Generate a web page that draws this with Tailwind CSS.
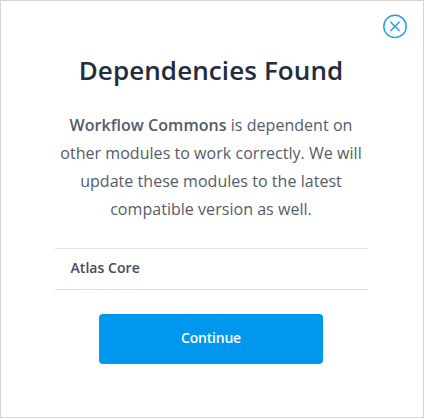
<!DOCTYPE html>
<html lang="en"><head><meta charset="utf-8"><title>Dependencies Found</title>
<script src="https://cdn.jsdelivr.net/npm/@tailwindcss/browser@4"></script></head>
<body class="bg-white font-['Open_Sans',sans-serif]">
<main class="relative flex h-[418px] w-[424px] flex-col items-center border border-[#d5d5d5] bg-white pr-[55px] pl-[53px] pt-[49px]">
<button aria-label="Close" class="absolute top-[12px] right-[15px] size-[26px]">
<svg viewBox="0 0 26 26" class="size-[26px]" fill="none" stroke="#1b9fe8" stroke-width="1.4"><circle cx="13" cy="13.4" r="11.2"/><path d="M8.4 8.8l9.2 9.2M17.6 8.8l-9.2 9.2"/></svg></button>
<h1 class="text-[26px] leading-[40px] font-semibold tracking-[0.1px] whitespace-nowrap text-[#252c3d]">Dependencies Found</h1>
<p class="mt-[21px] text-center text-[16px] leading-[28px] tracking-[0.04px] whitespace-nowrap text-[#555b69]"><strong class="font-semibold">Workflow Commons</strong> is dependent on<br>other modules to work correctly. We will<br>update these modules to the latest<br>compatible version as well.</p>
<ul class="mt-[25px] w-[313px] border-y border-[#e2e2e2]"><li class="h-[40px] px-[16px] text-[14px] leading-[38px] font-semibold tracking-[0.05px] text-[#464c5b]">Atlas Core</li></ul>
<button class="mt-[24px] h-[50px] w-[224px] rounded-[4px] bg-[#0098ee] pb-[3px] text-[14px] font-semibold tracking-[-0.2px] text-white">Continue</button>
</main></body></html>
